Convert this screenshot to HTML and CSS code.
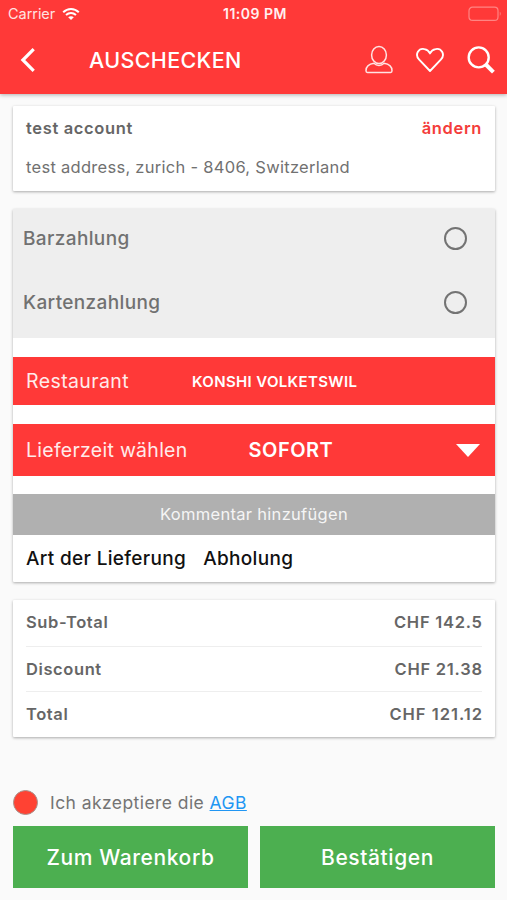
FILE: index.html
```html
<!DOCTYPE html>
<html lang="de">
<head>
<meta charset="utf-8">
<title>Auschecken</title>
<link rel="stylesheet" href="styles.css">
</head>
<body>
<header class="header">
  <div class="status">
    <div class="carrier"><span>Carrier</span>
      <svg width="18" height="14" viewBox="0 0 18 14" fill="none" stroke="#fff" stroke-width="2"><path d="M1.2 5.2C5.7 .8 12.3 .8 16.8 5.2M4 8.1c3-2.7 7-2.7 10 0"/><path d="M6.2 10.3c1.6-1.4 4-1.4 5.6 0L9 13z" fill="#fff" stroke="none"/></svg>
    </div>
    <span class="time">11:09 PM</span>
    <svg class="battery" width="34" height="16" viewBox="0 0 34 16" fill="none" stroke="#ff8583" stroke-width="1.2"><rect x="1" y="1.2" width="29" height="13.2" rx="3.5"/><path d="M31.8 5.8c1.2.6 1.2 3.4 0 4z" fill="#ff8583" stroke="none"/></svg>
  </div>
  <div class="bar">
    <svg class="back" width="18" height="26" viewBox="0 0 18 26" fill="none" stroke="#fff" stroke-width="3.2"><path d="M14.7 2.2 3.9 13l10.8 10.8"/></svg>
    <h1 class="title">AUSCHECKEN</h1>
    <svg class="user" width="30" height="30" viewBox="0 0 30 30" fill="none" stroke="#ffe4e3" stroke-width="1.5"><ellipse cx="15" cy="10" rx="7.4" ry="8.5"/><path d="M10 18.3c-4.6.6-8 2.4-8 7.5q0 1.6 1.4 1.6h23.2q1.4 0 1.4-1.6c0-5.1-3.4-6.9-8-7.5-2.6 2.8-7.4 2.8-10 0z"/></svg>
    <svg class="heart" width="30" height="28" viewBox="0 0 30 28" fill="none" stroke="#fff" stroke-width="1.9" stroke-linejoin="round"><path d="M15 25 4.2 13.7C-.8 8.2 4 1.8 9.4 3.1 12.6 3.7 14.2 5.8 15 7.4c.8-1.6 2.4-3.7 5.6-4.3 5.4-1.3 10.2 5.1 5.2 10.6z"/></svg>
    <svg class="search" width="30" height="30" viewBox="0 0 30 30" fill="none" stroke="#fff"><circle cx="12.7" cy="12.4" r="10" stroke-width="2.4"/><path d="m19.8 19.5 7.6 7.6" stroke-width="4"/></svg>
  </div>
</header>
<main class="content">
  <section class="card account">
    <div class="row"><strong class="name">test account</strong><a class="change">ändern</a></div>
    <p class="address">test address, zurich - 8406, Switzerland</p>
  </section>
  <section class="card order">
    <div class="payments">
      <label class="payment"><span class="cash">Barzahlung</span><i class="radio"></i></label>
      <label class="payment"><span class="credit">Kartenzahlung</span><i class="radio"></i></label>
    </div>
    <div class="band restaurant"><span class="band-label">Restaurant</span><strong class="place">KONSHI VOLKETSWIL</strong></div>
    <div class="band delivery"><span class="band-label wide">Lieferzeit wählen</span><strong class="soon">SOFORT</strong><i class="caret"></i></div>
    <div class="comment"><span>Kommentar hinzufügen</span></div>
    <div class="type"><span class="type-label">Art der Lieferung</span><span class="pickup">Abholung</span></div>
  </section>
  <section class="card totals">
    <div class="line"><span>Sub-Total</span><span class="amount">CHF 142.5</span></div>
    <div class="line"><span>Discount</span><span class="amount">CHF 21.38</span></div>
    <div class="line"><span>Total</span><span class="amount sum">CHF 121.12</span></div>
  </section>
  <div class="terms"><i class="check"></i><span>Ich akzeptiere die <a class="link">AGB</a></span></div>
  <div class="actions">
    <button class="button cart">Zum Warenkorb</button>
    <button class="button confirm">Bestätigen</button>
  </div>
</main>
</body>
</html>
```
FILE: styles.css
```css
* { box-sizing: border-box; }
body {
  margin: 0;
  height: 900px;
  overflow: hidden;
  background: #fafafa;
  color: #666;
  font-family: Inter, "Liberation Sans", sans-serif;
  white-space: nowrap;
}
.header {
  height: 94px;
  background: #ff3938;
  color: #fff;
  box-shadow: 0 1px 4px rgba(0, 0, 0, .3);
}
.status {
  display: grid;
  grid-template-columns: 1fr auto 1fr;
  align-items: center;
  height: 27px;
  padding: 0 5px 0 8px;
  font-size: 14.5px;
}
.carrier { display: flex; align-items: center; gap: 7px; color: #ffe2e1; letter-spacing: -.05px; }
.time { font-size: 14px; font-weight: 600; letter-spacing: .5px; color: #fff0f0; }
.battery { justify-self: end; }
.bar { display: flex; align-items: center; height: 66px; padding: 0 11px 0 19px; }
.title { margin: 0 0 0 52px; font-size: 21.5px; font-weight: 500; letter-spacing: .35px; }
.user { margin-left: auto; }
.heart { margin-left: 21px; }
.search { margin-left: 21px; }
.content { padding: 12px 12px 0 13px; }
.card { background: #fff; border-radius: 1px; box-shadow: 0 1px 3px rgba(0, 0, 0, .32); }
.account { height: 85px; padding: 12px 13px 0; }
.row { display: flex; justify-content: space-between; line-height: 21px; font-size: 16.5px; font-weight: 600; }
.name { font-weight: 600; letter-spacing: .65px; }
.change { color: #f43d3b; letter-spacing: .65px; }
.address { margin: 18px 0 0; line-height: 21px; font-size: 16.5px; letter-spacing: .28px; color: #717171; }
.order { height: 373px; margin-top: 18px; }
.payments { height: 129px; background: #eee; }
.payment { display: flex; align-items: center; justify-content: space-between; height: 64.5px; padding: 0 28px 6px 10px; font-size: 19px; font-weight: 500; letter-spacing: .37px; color: #717171; }
.radio { width: 23px; height: 23px; border: 2.5px solid #737373; border-radius: 50%; }
.band { display: flex; align-items: center; padding: 0 13px; background: #ff3938; color: #fff; }
.restaurant { height: 48.5px; margin-top: 18.5px; padding-top: 1px; }
.delivery { height: 52px; margin-top: 18.5px; padding-top: 1px; }
.band-label { width: 166px; font-size: 19.5px; letter-spacing: .4px; color: #ffebea; }
.wide { width: 222.5px; letter-spacing: .27px; }
.place { font-size: 15px; font-weight: 600; letter-spacing: .35px; }
.soon { font-size: 20px; font-weight: 600; letter-spacing: .5px; }
.caret { width: 24px; height: 13px; margin: 1px 2px 0 auto; background: #fff; clip-path: polygon(0 0, 100% 0, 50% 100%); }
.comment { display: flex; align-items: center; justify-content: center; height: 40.5px; margin-top: 18.5px; background: #b0b0b0; color: #f5f5f5; font-size: 16.5px; letter-spacing: .3px; }
.type { display: flex; align-items: center; gap: 17px; height: 48px; padding: 0 13px; color: #111; font-size: 19px; font-weight: 500; letter-spacing: .33px; }
.totals { height: 137px; margin-top: 18px; padding: 0 13px; }
.line { display: flex; align-items: center; justify-content: space-between; height: 45.7px; padding-bottom: 1px; font-size: 16.5px; font-weight: 600; letter-spacing: .6px; }
.line + .line { border-top: 1px solid #eee; }
.amount { letter-spacing: .75px; margin-right: -.75px; }
.sum { letter-spacing: 1px; margin-right: -1px; }
.terms { display: flex; align-items: center; gap: 12px; height: 26px; margin-top: 52px; font-size: 17.5px; letter-spacing: .43px; color: #747474; }
.check { width: 25px; height: 25px; border: 1px solid #a89590; border-radius: 50%; background: #ff4233; }
.link { color: #2196f3; text-decoration: underline; }
.actions { display: grid; grid-template-columns: 1fr 1fr; gap: 12px; margin-top: 10.5px; }
.button { height: 62px; padding: 1px 0 0; border: 0; background: #4caf50; color: #fff; font: 500 21px Inter, "Liberation Sans", sans-serif; letter-spacing: .6px; }
```
